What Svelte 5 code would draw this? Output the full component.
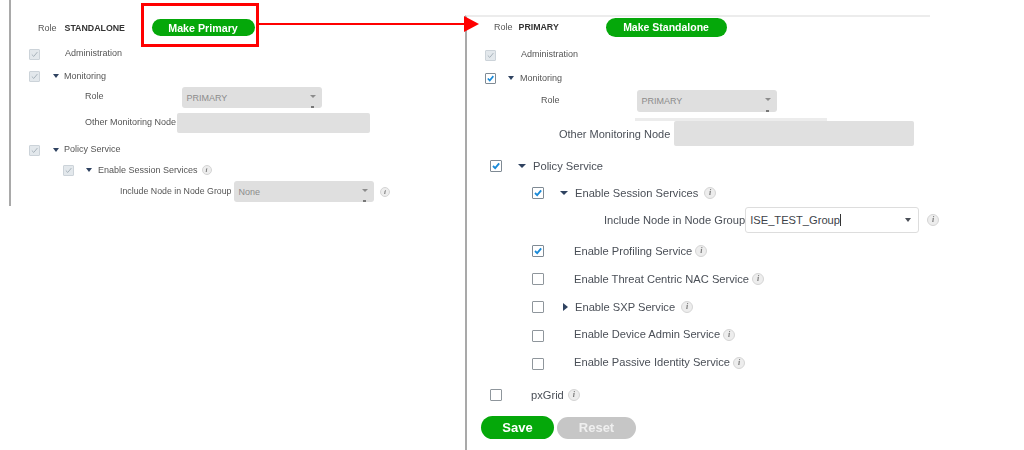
<script>
  const services = [
    { label: 'Enable Profiling Service', on: true, cls: 'mt10' },
    { label: 'Enable Threat Centric NAC Service', on: false, cls: 'mt12' }
  ]
  const lastServices = [
    { label: 'Enable Device Admin Service', cls: 'mt13' },
    { label: 'Enable Passive Identity Service', cls: 'mt12' }
  ]
</script>

{#snippet check(state)}
  <span class="check {state}">
    {#if !state.startsWith('off')}
      <svg viewBox="0 0 12 12"><path d="M2.4 6 5 8.6 9.8 2.8" /></svg>
    {/if}
  </span>
{/snippet}

{#snippet info(cls = '')}
  <span class="info {cls}">i</span>
{/snippet}

{#snippet arrows()}
  <span class="caret"></span>
  <span class="caret-cut"></span>
{/snippet}

<div class="page">
  <section class="panel left">
    <div class="row h18 role-row">
      <span class="lbl">Role</span>
      <b>STANDALONE</b>
      <button class="pill make-primary">Make Primary</button>
    </div>
    <div class="row mt10 in18">
      {@render check('dis')}
      <span class="lbl a-label up1">Administration</span>
    </div>
    <div class="row mt6 in18">
      {@render check('dis')}
      <span class="tri t-l"></span>
      <span class="lbl">Monitoring</span>
    </div>
    <div class="row sel-row mt3">
      <span class="lbl w97 up2">Role</span>
      <div class="select dis">PRIMARY{@render arrows()}</div>
    </div>
    <div class="row inp-row mt5">
      <span class="lbl w92 up1">Other Monitoring Node</span>
      <div class="input"></div>
    </div>
    <div class="row mt9 in18">
      {@render check('dis')}
      <span class="tri t-l"></span>
      <span class="lbl up1">Policy Service</span>
    </div>
    <div class="row mt4 in52">
      {@render check('dis')}
      <span class="tri t-l2"></span>
      <span class="lbl">Enable Session Services</span>
      {@render info('m4')}
    </div>
    <div class="row sel-row mt3 in109">
      <span class="lbl w114 small up1">Include Node in Node Group</span>
      <div class="select dis">None{@render arrows()}</div>
      {@render info('m6')}
    </div>
  </section>

  <section class="panel right">
    <div class="row h20 r-role">
      <span class="lbl">Role</span>
      <b>PRIMARY</b>
      <button class="pill make-standalone">Make Standalone</button>
    </div>
    <div class="row mt10 in18b">
      {@render check('dis')}
      <span class="lbl r-admin up1">Administration</span>
    </div>
    <div class="row mt7 in18b">
      {@render check('on')}
      <span class="tri t-r"></span>
      <span class="lbl">Monitoring</span>
    </div>
    <div class="row r-sel mt4">
      <span class="lbl w96 up1">Role</span>
      <div class="select dis">PRIMARY{@render arrows()}</div>
      <span class="sliver"></span>
    </div>
    <div class="row r-inp mt9">
      <span class="big other w115">Other Monitoring Node</span>
      <div class="input"></div>
    </div>

    <div class="row mt12 in23">
      {@render check('on big-box')}
      <span class="tri big-tri t-p"></span>
      <span class="big">Policy Service</span>
    </div>
    <div class="row mt11 in65">
      {@render check('on big-box')}
      <span class="tri big-tri t-p"></span>
      <span class="big">Enable Session Services</span>
      {@render info('m6')}
    </div>
    <div class="row r-group mt6">
      <span class="big w142">Include Node in Node Group</span>
      <div class="select live">ISE_TEST_Group<span class="text-cursor"></span><span class="caret"></span></div>
      {@render info('m8')}
    </div>

    {#each services as s}
      <div class="row {s.cls} in65">
        {@render check((s.on ? 'on' : 'off') + ' big-box')}
        <span class="big svc">{s.label}</span>
        {@render info('m3')}
      </div>
    {/each}

    <div class="row mt12 in65">
      {@render check('off big-box')}
      <span class="tri-right"></span>
      <span class="big">Enable SXP Service</span>
      {@render info('m6')}
    </div>

    {#each lastServices as s}
      <div class="row {s.cls} in65">
        {@render check('off big-box')}
        <span class="big svc up2">{s.label}</span>
        <span class="up1-wrap">{@render info('m3')}</span>
      </div>
    {/each}

    <div class="row mt15 in23">
      {@render check('off big-box')}
      <span class="big px">pxGrid</span>
      {@render info('m4')}
    </div>

    <div class="row btn-row mt13">
      <button class="pill save">Save</button>
      <button class="pill reset">Reset</button>
    </div>
  </section>

  <div class="red-box"></div>
  <svg class="red-arrow" viewBox="0 0 222 18">
    <rect x="0" y="8" width="208" height="2" fill="#f00" />
    <path d="M206 1 221 9 206 17Z" fill="#f00" />
  </svg>
</div>

<style>
  :global(body) {
    margin: 0;
    background: #fff;
  }

  .page {
    position: relative;
    width: 1024px;
    height: 450px;
    overflow: hidden;
    display: flex;
    align-items: flex-start;
    padding-left: 9px;
    box-sizing: border-box;
    font-family: 'Liberation Sans', Arial, sans-serif;
    color: #555;
  }

  .panel {
    box-sizing: border-box;
    display: flex;
    flex-direction: column;
    flex: none;
  }

  .left {
    filter: blur(0.6px);
    width: 456px;
    height: 206px;
    border-left: 2px solid #a9a9a9;
    padding-top: 19px;
    font-size: 9px;
  }

  .right {
    filter: blur(0.5px);
    width: 465px;
    height: 435px;
    margin-top: 15px;
    border-left: 2px solid #a9a9a9;
    border-top: 2px solid #ececec;
    padding-left: 1px;
    font-size: 9px;
  }

  .row {
    display: flex;
    align-items: center;
    height: 16px;
    flex: none;
  }

  .h18 { height: 17px; }
  .h20 { height: 20px; }
  .mt3 { margin-top: 3px; }
  .mt4 { margin-top: 4px; }
  .mt5 { margin-top: 5px; }
  .mt6 { margin-top: 6px; }
  .mt7 { margin-top: 7px; }
  .mt9 { margin-top: 9px; }
  .mt10 { margin-top: 10px; }
  .mt11 { margin-top: 11px; }
  .mt12 { margin-top: 12px; }
  .mt13 { margin-top: 13px; }
  .mt15 { margin-top: 15px; }

  .in18 { padding-left: 18px; }
  .in18b { padding-left: 17px; }
  .in23 { padding-left: 22px; }
  .in52 { padding-left: 52px; }
  .in65 { padding-left: 64px; }

  .lbl { white-space: nowrap; }
  .small { font-size: 8.8px; }
  .big { font-size: 11.15px; white-space: nowrap; color: #4a4f57; }
  .other { font-size: 11px; }

  .up1 { position: relative; top: -1px; }
  .up2 { position: relative; top: -2px; }
  .up1-wrap { display: flex; position: relative; top: -1px; }

  b {
    color: #333;
    font-size: 8.8px;
  }

  .role-row { padding-left: 27px; }
  .role-row b { margin-left: 8px; width: 87px; }
  .r-role { padding-left: 26px; }
  .r-role b { margin-left: 6px; width: 87px; }

  .a-label { margin-left: 25px; }
  .r-admin { margin-left: 25px; }

  .sel-row { height: 21px; padding-left: 74px; }
  .inp-row { height: 20px; padding-left: 74px; }
  .r-sel { position: relative; height: 22px; padding-left: 73px; }
  .r-inp { height: 25px; padding-left: 91px; }
  .r-group { height: 26px; padding-left: 136px; }
  .sel-row.in109 { padding-left: 109px; }

  .w97 { width: 97px; }
  .w92 { width: 92px; }
  .w114 { width: 114px; }
  .w96 { width: 96px; }
  .w115 { width: 115px; }
  .w142 { width: 142px; }

  .select {
    position: relative;
    flex: none;
    box-sizing: border-box;
    display: flex;
    align-items: center;
    height: 100%;
    border-radius: 3px;
    padding-left: 4.5px;
  }

  .select.dis {
    width: 140px;
    background: #dfdfdf;
    color: #8c8c8c;
  }

  .select.live {
    width: 174px;
    border: 1px solid #ddd;
    background: #fff;
    color: #3d4248;
    font-size: 11.15px;
    padding-left: 4px;
  }

  .text-cursor {
    width: 1px;
    height: 12px;
    background: #333;
  }

  .caret {
    position: absolute;
    right: 6px;
    top: 8px;
    border: 3px solid transparent;
    border-top: 3px solid #8c8c8c;
    border-bottom: 0;
  }

  .select.live .caret {
    right: 7px;
    top: 10px;
    border-width: 4px 3.5px 0;
    border-top-color: #4a4f57;
  }

  .caret-cut {
    position: absolute;
    right: 8px;
    bottom: 0;
    width: 3px;
    height: 2px;
    background: #777;
  }

  .sliver {
    position: absolute;
    left: 167px;
    top: 28px;
    width: 192px;
    height: 3px;
    background: #ececec;
  }

  .input {
    position: relative;
    flex: none;
    height: 100%;
    background: #e0e0e0;
    border-radius: 2px;
  }

  .inp-row .input { width: 193px; }
  .r-inp .input { width: 240px; }

  .check {
    flex: none;
    box-sizing: border-box;
    width: 11px;
    height: 11px;
    border: 1px solid #a8b0b8;
    border-radius: 1px;
    background: #fff;
    display: block;
  }

  .check svg {
    display: block;
    width: 100%;
    height: 100%;
    fill: none;
    stroke: #1a8ad8;
    stroke-width: 2.2;
  }

  .check.dis {
    background: #e3e8ec;
    border-color: #ccd3d9;
  }

  .check.dis svg {
    stroke: #a2adb5;
    stroke-width: 1.2;
  }

  .check.on { border-color: #7f8a94; }
  .check.off { border-color: #8f969c; }

  .check.big-box {
    width: 12px;
    height: 12px;
  }

  .tri {
    flex: none;
    width: 0;
    height: 0;
    border: 3px solid transparent;
    border-top: 4px solid #2f4260;
    border-bottom: 0;
  }

  .big-tri {
    border-width: 4px 4px 0;
  }

  .t-l { margin: 0 5px 0 13px; }
  .t-l2 { margin: 0 6px 0 12px; }
  .t-r { margin: 0 6px 0 12px; }
  .t-p { margin: 0 7px 0 16px; }

  .tri-right {
    flex: none;
    width: 0;
    height: 0;
    margin: 0 7px 0 19px;
    border: 4px solid transparent;
    border-left: 5px solid #2f4260;
    border-right: 0;
  }

  .svc { margin-left: 30px; }
  .px { margin-left: 29px; }

  .info {
    flex: none;
    box-sizing: border-box;
    width: 10px;
    height: 10px;
    border: 1px solid #d4d4d4;
    border-radius: 50%;
    background: #ededed;
    color: #777;
    font: italic bold 7px/8px 'Liberation Serif', serif;
    text-align: center;
  }

  .right .info {
    width: 12px;
    height: 12px;
    font-size: 8px;
    line-height: 10px;
  }

  .m3 { margin-left: 3px; }
  .m4 { margin-left: 4px; }
  .m6 { margin-left: 6px; }
  .m8 { margin-left: 8px; }

  .pill {
    flex: none;
    border: 0;
    padding: 0;
    border-radius: 12px;
    color: #fff;
    font-family: inherit;
    font-weight: bold;
    background: #05a80a;
  }

  .make-primary {
    width: 103px;
    height: 17px;
    font-size: 10.7px;
  }

  .make-standalone {
    width: 121px;
    height: 19px;
    font-size: 10.5px;
  }

  .btn-row {
    height: 23px;
    padding-left: 13px;
    gap: 3px;
  }

  .save {
    width: 73px;
    height: 23px;
    font-size: 13px;
  }

  .reset {
    width: 79px;
    height: 22px;
    font-size: 13px;
    background: #c6c6c6;
    color: #efefef;
  }

  .red-box {
    position: absolute;
    left: 141px;
    top: 3px;
    width: 118px;
    height: 44px;
    box-sizing: border-box;
    border: 3px solid #f00;
  }

  .red-arrow {
    position: absolute;
    left: 258px;
    top: 15px;
    width: 222px;
    height: 18px;
  }
</style>
